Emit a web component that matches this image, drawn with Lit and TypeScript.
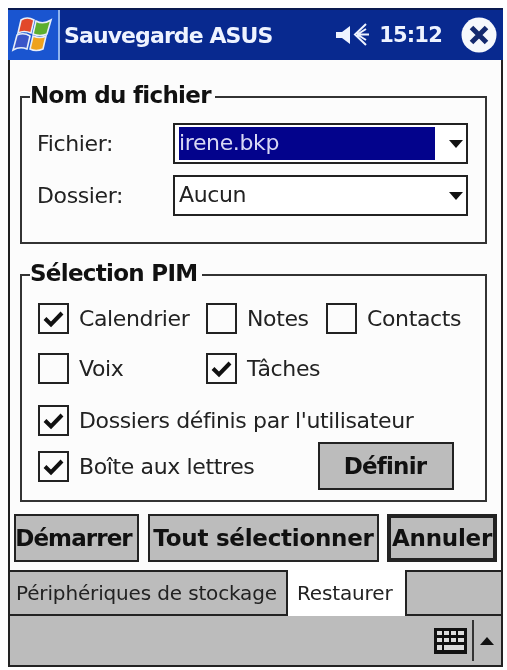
import { LitElement, html, css, svg } from "lit";
import { customElement } from "lit/decorators.js";

const check = svg`<svg class="tick" viewBox="0 0 27 27" width="27" height="27"><path d="M5 13.5 L11 19.5 L22 8" fill="none" stroke="#111" stroke-width="4"/></svg>`;

@customElement("app-root")
export class AppRoot extends LitElement {
  static styles = css`
    :host { display: block; width: 507px; height: 670px; background: #fff; overflow: hidden;
      font-family: "DejaVu Sans", Verdana, sans-serif; color: #222; }
    * { box-sizing: border-box; }
    .frame { margin: 8px 0 0 8px; width: 495px; height: 659px; display: flex; flex-direction: column;
      filter: blur(0.6px); border-bottom: 2px solid #222; }
    .title { height: 52px; flex: none; display: flex; align-items: center; background: #08298f;
      border-top: 2px solid #0a1a50; color: #eef3ff; }
    .start { width: 52px; height: 100%; background: #1a55d0; border-right: 2px solid #8fb4ee; display: flex;
      align-items: center; justify-content: center; }
    .app { margin-left: 4px; font: bold 22px "DejaVu Sans", sans-serif; letter-spacing: -0.9px; flex: 1; }
    .time { font: bold 21px "DejaVu Sans", sans-serif; letter-spacing: -0.8px; margin: 0 19px 0 7px; }
    .close { margin-right: 6px; }
    .content { flex: none; height: 510px; padding: 36px 14px 0 10px; background: #fcfcfc;
      border-left: 2px solid #222; border-right: 2px solid #222; display: flex; flex-direction: column; }
    .group { position: relative; border: 2px solid #333; flex: none; width: 467px; }
    .g1 { height: 148px; padding: 25px 0 0 15px; }
    .g2 { height: 228px; margin-top: 30px; padding: 27px 0 0 16px; }
    .legend { position: absolute; top: -20px; left: 8px; padding: 0 4px 0 0; background: #fcfcfc;
      font: bold 23px/34px "DejaVu Sans", sans-serif; letter-spacing: -0.7px; color: #111; }
    .row { display: flex; align-items: center; height: 41px; }
    .row + .row { margin-top: 11px; }
    .lab { width: 136px; font-size: 22px; letter-spacing: -0.37px; }
    .select { width: 295px; height: 41px; border: 2px solid #222; background: #fff; display: flex;
      align-items: center; padding: 0 3px 0 4px; font-size: 22px; letter-spacing: -0.37px; }
    .val { flex: 1; height: 33px; line-height: 32px; }
    .sel { background: #03038c; color: #d8d8f4; margin-right: 14px; }
    .caret { width: 0; height: 0; border: 7px solid transparent; border-top: 8px solid #111; border-bottom: 0; flex: none; }
    .checks { display: grid; grid-template-columns: 168px 120px 1fr; row-gap: 20px; }
    .cb { display: flex; align-items: center; height: 30px; font-size: 22px; letter-spacing: -0.37px; white-space: nowrap; }
    .box { width: 31px; height: 31px; flex: none; border: 2px solid #222; margin-right: 10px; background: #fcfcfc;
      display: flex; align-items: center; justify-content: center; }
    .line3 { margin-top: 22px; }
    .line4 { display: flex; align-items: center; margin-top: 7px; padding-right: 31px; }
    .btn { height: 48px; background: #bcbcbc; border: 2px solid #222; display: flex; align-items: center;
      justify-content: center; font: bold 23px "DejaVu Sans", sans-serif; letter-spacing: -0.25px; color: #111; white-space: nowrap; }
    .def { width: 136px; margin-left: auto; letter-spacing: -0.8px; padding-right: 2px; }
    .buttons { display: flex; margin-top: 12px; margin-left: -6px; width: 483px; }
    .b1 { width: 125px; letter-spacing: -0.9px; padding-right: 6px; } .b2 { width: 231px; margin-left: 9px; } .b3 { width: 110px; margin-left: 8px; border-width: 4px; }
    .tabs { height: 46px; flex: none; display: flex; background: #bcbcbc; border-top: 2px solid #222; border-bottom: 2px solid #222;
      border-left: 2px solid #222; border-right: 2px solid #222; font-size: 20px; letter-spacing: -0.15px; }
    .tab { display: flex; align-items: center; }
    .t1 { width: 278px; padding-left: 6px; border-right: 2px solid #222; }
    .t2 { width: 119px; margin-top: -2px; margin-bottom: -2px; background: #fff; padding-left: 9px; border-right: 2px solid #222; }
    .menu { flex: 1; background: #bcbcbc; border-left: 2px solid #222; border-right: 2px solid #222; display: flex;
      align-items: center; justify-content: flex-end; padding-right: 7px; }
    .sep { width: 2px; height: 41px; background: #333; margin: 0 6px 0 5px; }
    .up { width: 0; height: 0; border: 7px solid transparent; border-bottom: 8px solid #111; border-top: 0; }
  `;

  cb(label: string, on = false) {
    return html`<div class="cb"><span class="box">${on ? check : ""}</span>${label}</div>`;
  }

  render() {
    return html`<div class="frame">
      <div class="title">
        <div class="start">
          <svg width="46" height="42" viewBox="0 0 46 42">
            <g stroke="#e8eef8" stroke-width="1.6">
              <path d="M11 6 Q17 2 24 6 L21 19 Q14 16 8 19 Z" fill="#e2482a"/>
              <path d="M26 7 Q33 11 41 6 L37 20 Q30 23 23 20 Z" fill="#5cae2e"/>
              <path d="M7 21 Q14 18 20 22 L17 35 Q10 32 3 36 Z" fill="#3a55c8"/>
              <path d="M23 22 Q30 25 36 22 L33 35 Q26 38 20 35 Z" fill="#eea21e"/>
            </g>
          </svg>
        </div>
        <div class="app">Sauvegarde ASUS</div>
        <svg width="36" height="24" viewBox="0 0 36 24">
          <path d="M0 9 H6 L14 3 V21 L6 15 H0 Z" fill="#eef3ff"/>
          <path d="M30 1 L19 11.5 L30 22 M33 11.5 H21 M30 6 L22 11 M30 17 L22 12" fill="none" stroke="#eef3ff" stroke-width="2"/>
        </svg>
        <div class="time">15:12</div>
        <svg class="close" width="36" height="36" viewBox="0 0 36 36">
          <circle cx="18" cy="18" r="17.5" fill="#f6f8fc"/>
          <path d="M10.5 10.5 L25.5 25.5 M25.5 10.5 L10.5 25.5" stroke="#14296e" stroke-width="5"/>
        </svg>
      </div>
      <div class="content">
        <div class="group g1">
          <div class="legend">Nom du fichier</div>
          <div class="row"><span class="lab">Fichier:</span>
            <div class="select"><span class="val sel">irene.bkp</span><span class="caret"></span></div></div>
          <div class="row"><span class="lab">Dossier:</span>
            <div class="select"><span class="val">Aucun</span><span class="caret"></span></div></div>
        </div>
        <div class="group g2">
          <div class="legend">Sélection PIM</div>
          <div class="checks">
            ${this.cb("Calendrier", true)}${this.cb("Notes")}${this.cb("Contacts")}
            ${this.cb("Voix")}${this.cb("Tâches", true)}
          </div>
          <div class="line3">${this.cb("Dossiers définis par l'utilisateur", true)}</div>
          <div class="line4">${this.cb("Boîte aux lettres", true)}<div class="btn def">Définir</div></div>
        </div>
        <div class="buttons">
          <div class="btn b1">Démarrer</div>
          <div class="btn b2">Tout sélectionner</div>
          <div class="btn b3">Annuler</div>
        </div>
      </div>
      <div class="tabs">
        <div class="tab t1">Périphériques de stockage</div>
        <div class="tab t2">Restaurer</div>
      </div>
      <div class="menu">
        <svg width="33" height="26" viewBox="0 0 33 26">
          <rect width="33" height="26" fill="#111"/>
          <g fill="#ddd">
            <rect x="3" y="3" width="5" height="4"/><rect x="10" y="3" width="5" height="4"/><rect x="17" y="3" width="5" height="4"/><rect x="24" y="3" width="6" height="4"/>
            <rect x="3" y="10" width="5" height="4"/><rect x="10" y="10" width="5" height="4"/><rect x="17" y="10" width="5" height="4"/><rect x="24" y="10" width="6" height="4"/>
            <rect x="3" y="17" width="5" height="5"/><rect x="10" y="17" width="20" height="5"/>
          </g>
        </svg>
        <div class="sep"></div>
        <div class="up"></div>
      </div>
    </div>`;
  }
}
